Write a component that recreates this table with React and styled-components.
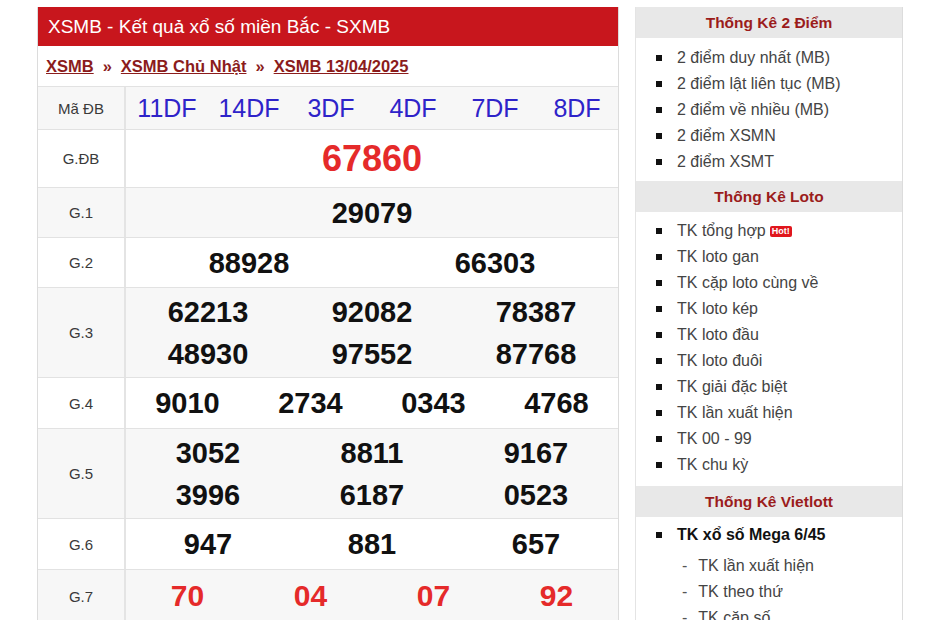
import styled, { createGlobalStyle } from 'styled-components';

const Global = createGlobalStyle`
	body {
		margin: 0;
		background: #fff;
		font-family: "Liberation Sans", Arial, sans-serif;
	}
`;

const Page = styled.div`
	display: flex;
	align-items: flex-start;
	gap: 16px;
	padding: 7px 0 0 37px;
	height: 613px;
	overflow: hidden;
`;

const Results = styled.div`
	width: 580px;
	border: 1px solid #dcdcdc;
	border-top: none;
	flex-shrink: 0;
`;

const Title = styled.h2`
	margin: 0;
	height: 39px;
	display: flex;
	align-items: center;
	padding-left: 10px;
	background: #c8161d;
	color: #fff;
	font-size: 19px;
	font-weight: normal;
`;

const Crumbs = styled.div`
	height: 40px;
	display: flex;
	align-items: center;
	gap: 9px;
	padding-left: 8px;
	font-size: 16.5px;
	font-weight: bold;
	color: #8b1c1c;
	border-bottom: 1px solid #e2e2e2;
`;

const Crumb = styled.a`
	color: #8b1c1c;
	text-decoration: underline;
`;

const Row = styled.div`
	display: grid;
	grid-template-columns: 88px 1fr;
	height: ${p => p.$h}px;
	background: ${p => (p.$alt ? '#f7f7f7' : '#fff')};
	border-bottom: 1px solid #e2e2e2;
`;

const Label = styled.div`
	display: flex;
	align-items: center;
	justify-content: center;
	font-size: 15px;
	color: #3a3a3a;
	border-right: 2px solid #e4e4e4;
`;

const Numbers = styled.div`
	display: grid;
	grid-template-columns: repeat(${p => p.$cols}, 1fr);
	align-content: center;
	row-gap: 10px;
`;

const Num = styled.span`
	text-align: center;
	font-size: ${p => p.$size || 29}px;
	line-height: 32px;
	font-weight: bold;
	color: ${p => p.$color || '#111'};
`;

const Code = styled.span`
	text-align: center;
	font-size: 25px;
	line-height: 30px;
	color: #2e23c9;
`;

const Side = styled.div`
	width: 266px;
	border-left: 1px solid #e4e4e4;
	border-right: 1px solid #dcdcdc;
	flex-shrink: 0;
`;

const SideHead = styled.div`
	height: 31px;
	display: flex;
	align-items: center;
	justify-content: center;
	background: #e8e8e8;
	color: #9b1c1c;
	font-size: 15.5px;
	font-weight: bold;
`;

const List = styled.ul`
	margin: 0;
	padding: ${p => p.$pad || '7px 0 6px 0'};
	list-style: none;
`;

const Item = styled.li`
	display: flex;
	align-items: center;
	height: 26px;
	margin-bottom: ${p => (p.$bold ? 5 : 0)}px;
	padding-left: ${p => (p.$sub ? 46 : 20)}px;
	font-size: 16px;
	color: ${p => (p.$bold ? '#111' : '#444')};
	font-weight: ${p => (p.$bold ? 'bold' : 'normal')};
	&::before {
		content: '';
		width: 6px;
		height: 6px;
		background: #111;
		margin-right: 15px;
		display: ${p => (p.$sub ? 'none' : 'block')};
	}
`;

const Dash = styled.span`
	margin-right: 11px;
	color: #555;
`;

const Hot = styled.span`
	display: inline-block;
	margin-left: 4px;
	padding: 0 2px;
	background: #e0161d;
	color: #fff;
	font-size: 9px;
	font-weight: bold;
	line-height: 11px;
	border-radius: 2px;
`;

const rows = [
	{ label: 'G.ĐB', h: 57, cols: 1, nums: ['67860'], size: 36, color: '#e52a2a' },
	{ label: 'G.1', h: 49, cols: 1, nums: ['29079'], alt: true },
	{ label: 'G.2', h: 49, cols: 2, nums: ['88928', '66303'] },
	{ label: 'G.3', h: 89, cols: 3, nums: ['62213', '92082', '78387', '48930', '97552', '87768'], alt: true },
	{ label: 'G.4', h: 50, cols: 4, nums: ['9010', '2734', '0343', '4768'] },
	{ label: 'G.5', h: 89, cols: 3, nums: ['3052', '8811', '9167', '3996', '6187', '0523'], alt: true },
	{ label: 'G.6', h: 50, cols: 3, nums: ['947', '881', '657'] },
	{ label: 'G.7', h: 52, cols: 4, nums: ['70', '04', '07', '92'], alt: true, color: '#e52a2a', size: 30 },
];

const codes = ['11DF', '14DF', '3DF', '4DF', '7DF', '8DF'];

const twoPoint = ['2 điểm duy nhất (MB)', '2 điểm lật liên tục (MB)', '2 điểm về nhiều (MB)', '2 điểm XSMN', '2 điểm XSMT'];
const loto = ['TK loto gan', 'TK cặp loto cùng về', 'TK loto kép', 'TK loto đầu', 'TK loto đuôi', 'TK giải đặc biệt', 'TK lần xuất hiện', 'TK 00 - 99', 'TK chu kỳ'];

export default function App() {
	return (
		<>
			<Global />
			<Page>
				<Results>
					<Title>XSMB - Kết quả xổ số miền Bắc - SXMB</Title>
					<Crumbs>
						<Crumb>XSMB</Crumb>
						<span>»</span>
						<Crumb>XSMB Chủ Nhật</Crumb>
						<span>»</span>
						<Crumb>XSMB 13/04/2025</Crumb>
					</Crumbs>
					<Row $h={42} $alt>
						<Label>Mã ĐB</Label>
						<Numbers $cols={6}>
							{codes.map(c => <Code key={c}>{c}</Code>)}
						</Numbers>
					</Row>
					{rows.map(r => (
						<Row key={r.label} $h={r.h} $alt={r.alt}>
							<Label>{r.label}</Label>
							<Numbers $cols={r.cols}>
								{r.nums.map((n, i) => (
									<Num key={i} $size={r.size} $color={r.color}>{n}</Num>
								))}
							</Numbers>
						</Row>
					))}
				</Results>
				<Side>
					<SideHead>Thống Kê 2 Điểm</SideHead>
					<List>
						{twoPoint.map(t => <Item key={t}>{t}</Item>)}
					</List>
					<SideHead>Thống Kê Loto</SideHead>
					<List $pad="6px 0 8px 0">
						<Item>TK tổng hợp<Hot>Hot!</Hot></Item>
						{loto.map(t => <Item key={t}>{t}</Item>)}
					</List>
					<SideHead>Thống Kê Vietlott</SideHead>
					<List $pad="5px 0 0 0">
						<Item $bold>TK xổ số Mega 6/45</Item>
						<Item $sub><Dash>-</Dash>TK lần xuất hiện</Item>
						<Item $sub><Dash>-</Dash>TK theo thứ</Item>
						<Item $sub><Dash>-</Dash>TK cặp số</Item>
					</List>
				</Side>
			</Page>
		</>
	);
}
